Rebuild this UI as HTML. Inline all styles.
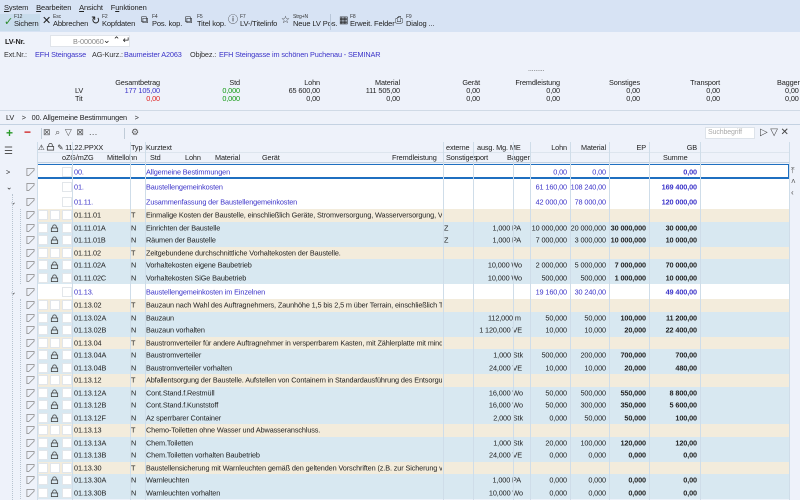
<!DOCTYPE html>
<html><head><meta charset="utf-8">
<style>
*{margin:0;padding:0;box-sizing:border-box}
body{width:800px;height:500px;overflow:hidden;background:#eef2fa;font-family:"Liberation Sans",sans-serif;font-size:7.3px;letter-spacing:-0.12px;color:#222;position:relative}
.a{position:absolute;white-space:nowrap}
.r{text-align:right}
.blue{color:#3a32c8}
.grn{color:#119911}
.red{color:#e02020}
.row{position:absolute;left:0;width:789px}
.row .a{top:50%;transform:translateY(-50%)}
.bg{position:absolute;left:37px;right:0;top:0;bottom:0}
.T .bg{background:#f3ecdc}
.N .bg{background:#d8e8f1}
.H .bg{background:#fff}
.b{font-weight:bold}
.vl{position:absolute;top:142px;bottom:0;width:1px;background:#cfdde9}
.cb{position:absolute;width:10px;height:10px;background:#fff;border:1px solid #e2e6ea;top:50%;transform:translateY(-50%)}
.ic{position:absolute;left:26px;top:50%;transform:translateY(-50%)}
.lk{position:absolute;left:50px;top:50%;transform:translateY(-50%)}
.tb span.k{display:block;font-size:5px;line-height:5px;color:#333}
</style></head><body>
<svg width="0" height="0" style="position:absolute">
<defs>
<symbol id="ed" viewBox="0 0 10 10"><path d="M1 1H9L9 3L3 9H1Z" fill="none" stroke="#888" stroke-width="0.8"/></symbol>
<symbol id="lock" viewBox="0 0 10 10"><path d="M3 5V3.5a2 2 0 0 1 4 0V5" fill="none" stroke="#444" stroke-width="0.9"/><rect x="1.5" y="5" width="7" height="4" fill="none" stroke="#444" stroke-width="0.9"/></symbol>
</defs></svg>

<!-- menu + toolbar -->
<div class="a" style="left:0;top:0;width:800px;height:32px;background:#d7e3f4"></div>
<div class="a" style="left:4px;top:3px;font-size:7.5px"><u>S</u>ystem&nbsp;&nbsp;&nbsp;&nbsp;<u>B</u>earbeiten&nbsp;&nbsp;&nbsp;&nbsp;<u>A</u>nsicht&nbsp;&nbsp;&nbsp;&nbsp;F<u>u</u>nktionen</div>
<div class="a" style="left:0;top:14px;width:40px;height:17px;background:#c8dcec"></div>
<div class="a tb" style="left:4px;top:15px;font-size:7.5px;line-height:8px">
<span style="position:absolute;left:0;top:3px;color:#2a8a2a;font-size:11px">✓</span><span style="position:absolute;left:10px"><span class="k">F12</span>Sichern</span>
<span style="position:absolute;left:38px;top:2px;font-size:11px">✕</span><span style="position:absolute;left:49px"><span class="k">Esc</span>Abbrechen</span>
<span style="position:absolute;left:87px;top:2px;font-size:11px">↻</span><span style="position:absolute;left:98px"><span class="k">F2</span>Kopfdaten</span>
<span style="position:absolute;left:137px;top:2px;font-size:10px">⧉</span><span style="position:absolute;left:148px"><span class="k">F4</span>Pos. kop.</span>
<span style="position:absolute;left:181px;top:2px;font-size:10px">⧉</span><span style="position:absolute;left:193px"><span class="k">F5</span>Titel kop.</span>
<span style="position:absolute;left:224px;top:2px;font-size:10px">ⓘ</span><span style="position:absolute;left:236px"><span class="k">F7</span>LV-/Titelinfo</span>
<span style="position:absolute;left:277px;top:2px;font-size:10px">☆</span><span style="position:absolute;left:289px"><span class="k">Strg+N</span>Neue LV Pos.</span>
<span style="position:absolute;left:335px;top:2px;font-size:10px">▦</span><span style="position:absolute;left:346px"><span class="k">F8</span>Erweit. Felder</span>
<span style="position:absolute;left:391px;top:2px;font-size:10px">⎙</span><span style="position:absolute;left:402px"><span class="k">F9</span>Dialog ...</span>
</div>
<div class="a" style="left:330px;top:14px;width:1px;height:16px;background:#b8c6d8"></div>

<!-- header form -->
<div class="a b" style="left:5px;top:37px">LV-Nr.</div>
<div class="a" style="left:50px;top:35px;width:80px;height:12px;background:#fff;border:1px solid #e0e4ea"></div>
<div class="a" style="left:73px;top:37px;color:#888">B-000060</div>
<div class="a" style="left:103px;top:35px;font-size:9px">⌄ ⌃ ↵</div>
<div class="a" style="left:4px;top:50px;color:#333">Ext.Nr.:</div>
<div class="a blue" style="left:35px;top:50px">EFH Steingasse</div>
<div class="a" style="left:92px;top:50px;color:#333">AG-Kurz.:</div>
<div class="a blue" style="left:124px;top:50px">Baumeister A2063</div>
<div class="a" style="left:190px;top:50px;color:#333">Objbez.:</div>
<div class="a blue" style="left:219px;top:50px">EFH Steingasse im schönen Puchenau - SEMINAR</div>

<div class="a" style="left:528px;top:66px;color:#555;font-size:7px">.........</div>
<div class="a" style="left:75px;top:86px">LV</div>
<div class="a" style="left:75px;top:94px">Tit</div>
<div class="a r" style="left:100px;top:78px;width:60px">Gesamtbetrag</div>
<div class="a r blue" style="left:100px;top:86px;width:60px">177 105,00</div>
<div class="a r red" style="left:100px;top:94px;width:60px">0,00</div>
<div class="a r" style="left:180px;top:78px;width:60px">Std</div>
<div class="a r grn" style="left:180px;top:86px;width:60px">0,000</div>
<div class="a r grn" style="left:180px;top:94px;width:60px">0,000</div>
<div class="a r" style="left:260px;top:78px;width:60px">Lohn</div>
<div class="a r" style="left:260px;top:86px;width:60px">65 600,00</div>
<div class="a r" style="left:260px;top:94px;width:60px">0,00</div>
<div class="a r" style="left:340px;top:78px;width:60px">Material</div>
<div class="a r" style="left:340px;top:86px;width:60px">111 505,00</div>
<div class="a r" style="left:340px;top:94px;width:60px">0,00</div>
<div class="a r" style="left:420px;top:78px;width:60px">Gerät</div>
<div class="a r" style="left:420px;top:86px;width:60px">0,00</div>
<div class="a r" style="left:420px;top:94px;width:60px">0,00</div>
<div class="a r" style="left:500px;top:78px;width:60px">Fremdleistung</div>
<div class="a r" style="left:500px;top:86px;width:60px">0,00</div>
<div class="a r" style="left:500px;top:94px;width:60px">0,00</div>
<div class="a r" style="left:580px;top:78px;width:60px">Sonstiges</div>
<div class="a r" style="left:580px;top:86px;width:60px">0,00</div>
<div class="a r" style="left:580px;top:94px;width:60px">0,00</div>
<div class="a r" style="left:660px;top:78px;width:60px">Transport</div>
<div class="a r" style="left:660px;top:86px;width:60px">0,00</div>
<div class="a r" style="left:660px;top:94px;width:60px">0,00</div>
<div class="a" style="left:777px;top:78px">Bagger</div>
<div class="a" style="left:785px;top:86px">0,00</div>
<div class="a" style="left:785px;top:94px">0,00</div>

<!-- breadcrumb -->
<div class="a" style="left:0;top:110px;width:800px;height:15px;border-top:1px solid #d0dae6;border-bottom:1px solid #c4d2e2;background:#eef2fa"></div>
<div class="a" style="left:6px;top:113px">LV&nbsp;&nbsp;&nbsp;&nbsp;&gt;&nbsp;&nbsp;&nbsp;00. Allgemeine Bestimmungen&nbsp;&nbsp;&nbsp;&nbsp;&gt;</div>

<!-- grid toolbar -->
<div class="a" style="left:6px;top:126px;color:#2a9a2a;font-size:12px;font-weight:bold">+</div>
<div class="a" style="left:24px;top:125px;color:#d02020;font-size:12px;font-weight:bold">−</div>
<div class="a" style="left:41px;top:128px;width:1px;height:11px;background:#c0ccd8"></div>
<div class="a" style="left:43px;top:127px;font-size:9px;color:#555">⊠&nbsp;&nbsp;⌕&nbsp;&nbsp;▽&nbsp;&nbsp;⊠&nbsp;&nbsp;…</div>
<div class="a" style="left:124px;top:128px;width:1px;height:11px;background:#c0ccd8"></div>
<div class="a" style="left:131px;top:127px;font-size:9px;color:#555">⚙</div>
<div class="a" style="left:705px;top:127px;width:50px;height:12px;background:#fff;border:1px solid #dde3ea;color:#aaa;font-size:7px;padding:1px 2px">Suchbegriff</div>
<div class="a" style="left:760px;top:127px;font-size:10px;color:#444">▷&nbsp;▽&nbsp;✕</div>

<!-- grid header -->
<div class="a" style="left:0;top:141px;width:789px;height:22px;background:#eef2fa"></div>
<div class="a" style="left:4px;top:146px;font-size:10px;color:#555">☰</div>
<div class="a" style="left:38px;top:142px">⚠ <svg width="9" height="9" style="vertical-align:-1px"><use href="#lock"/></svg> ✎ 11.22.PPXX</div>
<div class="a" style="left:131px;top:143px">Typ</div>
<div class="a" style="left:146px;top:143px">Kurztext</div>
<div class="a" style="left:446px;top:143px">externe</div>
<div class="a" style="left:477px;top:143px">ausg. Mg. ME</div>
<div class="a r" style="left:530px;top:143px;width:37px">Lohn</div>
<div class="a r" style="left:570px;top:143px;width:36px">Material</div>
<div class="a r" style="left:609px;top:143px;width:37px">EP</div>
<div class="a r" style="left:649px;top:143px;width:48px">GB</div>
<div class="a" style="left:62px;top:153px">oZG/mZG</div>
<div class="a" style="left:107px;top:153px">Mittellohn</div>
<div class="a" style="left:150px;top:153px">Std</div>
<div class="a" style="left:185px;top:153px">Lohn</div>
<div class="a" style="left:215px;top:153px">Material</div>
<div class="a" style="left:262px;top:153px">Gerät</div>
<div class="a" style="left:392px;top:153px">Fremdleistung</div>
<div class="a" style="left:446px;top:153px">Sonstiges</div>
<div class="a" style="left:476px;top:153px">port</div>
<div class="a" style="left:507px;top:153px">Bagger</div>
<div class="a" style="left:663px;top:153px">Summe</div>
<div class="a" style="left:37px;top:152px;width:752px;height:1px;background:#dde5ee"></div>
<div class="a" style="left:37px;top:162px;width:752px;height:1px;background:#c4d2e2"></div>

<!-- right strip -->
<div class="a" style="left:789px;top:163px;width:11px;height:337px;background:#eef2fa"></div>
<div class="a" style="left:791px;top:165px;font-size:8px;color:#555;line-height:11px">⤒<br>˄<br>‹</div>

<!-- rows -->
<div class="row H" style="top:164px;height:15px"><div class="bg" style="border:1px solid #1f6fc0;border-bottom-width:2px"></div>
<span class="a" style="left:6px">&gt;</span><svg class="ic" width="9" height="9"><use href="#ed"/></svg><div class="cb" style="left:62px"></div>
<span class="a blue" style="left:74px">00.</span><span class="a blue" style="left:146px">Allgemeine Bestimmungen</span>
<span class="a r blue" style="left:530px;width:37px">0,00</span><span class="a r blue" style="left:570px;width:36px">0,00</span><span class="a r blue b" style="left:649px;width:48px">0,00</span></div>

<div class="row H" style="top:179px;height:15px"><div class="bg"></div>
<span class="a" style="left:6px">⌄</span><svg class="ic" width="9" height="9"><use href="#ed"/></svg><div class="cb" style="left:62px"></div>
<span class="a blue" style="left:74px">01.</span><span class="a blue" style="left:146px">Baustellengemeinkosten</span>
<span class="a r blue" style="left:530px;width:37px">61 160,00</span><span class="a r blue" style="left:570px;width:36px">108 240,00</span><span class="a r blue b" style="left:649px;width:48px">169 400,00</span></div>

<div class="row H" style="top:194px;height:15px"><div class="bg"></div>
<span class="a" style="left:10px">⌄</span><svg class="ic" width="9" height="9"><use href="#ed"/></svg><div class="cb" style="left:62px"></div>
<span class="a blue" style="left:74px">01.11.</span><span class="a blue" style="left:146px">Zusammenfassung der Baustellengemeinkosten</span>
<span class="a r blue" style="left:530px;width:37px">42 000,00</span><span class="a r blue" style="left:570px;width:36px">78 000,00</span><span class="a r blue b" style="left:649px;width:48px">120 000,00</span></div>

<div class="row T" style="top:209px;height:12.5px"><div class="bg"></div><svg class="ic" width="9" height="9"><use href="#ed"/></svg><div class="cb" style="left:38px"></div><div class="cb" style="left:50px"></div><div class="cb" style="left:62px"></div>
<span class="a" style="left:74px">01.11.01</span><span class="a" style="left:131px">T</span><span class="a" style="left:146px;width:296px;overflow:hidden">Einmalige Kosten der Baustelle, einschließlich Geräte, Stromversorgung, Wasserversorgung, Verkehrs</span></div>

<div class="row N" style="top:221.5px;height:12.5px"><div class="bg"></div><svg class="ic" width="9" height="9"><use href="#ed"/></svg><div class="cb" style="left:38px"></div><svg class="lk" width="9" height="9"><use href="#lock"/></svg><div class="cb" style="left:62px"></div>
<span class="a" style="left:74px">01.11.01A</span><span class="a" style="left:131px">N</span><span class="a" style="left:146px">Einrichten der Baustelle</span><span class="a" style="left:444px">Z</span>
<span class="a r" style="left:470px;width:51px">1,000 PA</span><span class="a r" style="left:530px;width:37px">10 000,000</span><span class="a r" style="left:570px;width:36px">20 000,000</span><span class="a r b" style="left:600px;width:46px">30 000,000</span><span class="a r b" style="left:649px;width:48px">30 000,00</span></div>

<div class="row N" style="top:234px;height:12.5px"><div class="bg"></div><svg class="ic" width="9" height="9"><use href="#ed"/></svg><div class="cb" style="left:38px"></div><svg class="lk" width="9" height="9"><use href="#lock"/></svg><div class="cb" style="left:62px"></div>
<span class="a" style="left:74px">01.11.01B</span><span class="a" style="left:131px">N</span><span class="a" style="left:146px">Räumen der Baustelle</span><span class="a" style="left:444px">Z</span>
<span class="a r" style="left:470px;width:51px">1,000 PA</span><span class="a r" style="left:530px;width:37px">7 000,000</span><span class="a r" style="left:570px;width:36px">3 000,000</span><span class="a r b" style="left:600px;width:46px">10 000,000</span><span class="a r b" style="left:649px;width:48px">10 000,00</span></div>

<div class="row T" style="top:246.5px;height:12.5px"><div class="bg"></div><svg class="ic" width="9" height="9"><use href="#ed"/></svg><div class="cb" style="left:38px"></div><div class="cb" style="left:50px"></div><div class="cb" style="left:62px"></div>
<span class="a" style="left:74px">01.11.02</span><span class="a" style="left:131px">T</span><span class="a" style="left:146px">Zeitgebundene durchschnittliche Vorhaltekosten der Baustelle.</span></div>

<div class="row N" style="top:259px;height:12.5px"><div class="bg"></div><svg class="ic" width="9" height="9"><use href="#ed"/></svg><div class="cb" style="left:38px"></div><svg class="lk" width="9" height="9"><use href="#lock"/></svg><div class="cb" style="left:62px"></div>
<span class="a" style="left:74px">01.11.02A</span><span class="a" style="left:131px">N</span><span class="a" style="left:146px">Vorhaltekosten eigene Baubetrieb</span>
<span class="a r" style="left:470px;width:52px">10,000 Wo</span><span class="a r" style="left:530px;width:37px">2 000,000</span><span class="a r" style="left:570px;width:36px">5 000,000</span><span class="a r b" style="left:600px;width:46px">7 000,000</span><span class="a r b" style="left:649px;width:48px">70 000,00</span></div>

<div class="row N" style="top:271.5px;height:12.5px"><div class="bg"></div><svg class="ic" width="9" height="9"><use href="#ed"/></svg><div class="cb" style="left:38px"></div><svg class="lk" width="9" height="9"><use href="#lock"/></svg><div class="cb" style="left:62px"></div>
<span class="a" style="left:74px">01.11.02C</span><span class="a" style="left:131px">N</span><span class="a" style="left:146px">Vorhaltekosten SiGe Baubetrieb</span>
<span class="a r" style="left:470px;width:52px">10,000 Wo</span><span class="a r" style="left:530px;width:37px">500,000</span><span class="a r" style="left:570px;width:36px">500,000</span><span class="a r b" style="left:600px;width:46px">1 000,000</span><span class="a r b" style="left:649px;width:48px">10 000,00</span></div>

<div class="row H" style="top:284px;height:15px"><div class="bg"></div>
<span class="a" style="left:10px">⌄</span><svg class="ic" width="9" height="9"><use href="#ed"/></svg><div class="cb" style="left:62px"></div>
<span class="a blue" style="left:74px">01.13.</span><span class="a blue" style="left:146px">Baustellengemeinkosten im Einzelnen</span>
<span class="a r blue" style="left:530px;width:37px">19 160,00</span><span class="a r blue" style="left:570px;width:36px">30 240,00</span><span class="a r blue b" style="left:649px;width:48px">49 400,00</span></div>

<div class="row T" style="top:299px;height:12.5px"><div class="bg"></div><svg class="ic" width="9" height="9"><use href="#ed"/></svg><div class="cb" style="left:38px"></div><div class="cb" style="left:50px"></div><div class="cb" style="left:62px"></div>
<span class="a" style="left:74px">01.13.02</span><span class="a" style="left:131px">T</span><span class="a" style="left:146px;width:296px;overflow:hidden">Bauzaun nach Wahl des Auftragnehmers, Zaunhöhe 1,5 bis 2,5 m über Terrain, einschließlich Türen</span></div>

<div class="row N" style="top:311.5px;height:12.5px"><div class="bg"></div><svg class="ic" width="9" height="9"><use href="#ed"/></svg><div class="cb" style="left:38px"></div><svg class="lk" width="9" height="9"><use href="#lock"/></svg><div class="cb" style="left:62px"></div>
<span class="a" style="left:74px">01.13.02A</span><span class="a" style="left:131px">N</span><span class="a" style="left:146px">Bauzaun</span>
<span class="a" style="left:488px">112,000 m</span><span class="a r" style="left:530px;width:37px">50,000</span><span class="a r" style="left:570px;width:36px">50,000</span><span class="a r b" style="left:600px;width:46px">100,000</span><span class="a r b" style="left:649px;width:48px">11 200,00</span></div>

<div class="row N" style="top:324px;height:12.5px"><div class="bg"></div><svg class="ic" width="9" height="9"><use href="#ed"/></svg><div class="cb" style="left:38px"></div><svg class="lk" width="9" height="9"><use href="#lock"/></svg><div class="cb" style="left:62px"></div>
<span class="a" style="left:74px">01.13.02B</span><span class="a" style="left:131px">N</span><span class="a" style="left:146px">Bauzaun vorhalten</span>
<span class="a r" style="left:470px;width:52px">1 120,000 VE</span><span class="a r" style="left:530px;width:37px">10,000</span><span class="a r" style="left:570px;width:36px">10,000</span><span class="a r b" style="left:600px;width:46px">20,000</span><span class="a r b" style="left:649px;width:48px">22 400,00</span></div>

<div class="row T" style="top:336.5px;height:12.5px"><div class="bg"></div><svg class="ic" width="9" height="9"><use href="#ed"/></svg><div class="cb" style="left:38px"></div><div class="cb" style="left:50px"></div><div class="cb" style="left:62px"></div>
<span class="a" style="left:74px">01.13.04</span><span class="a" style="left:131px">T</span><span class="a" style="left:146px;width:296px;overflow:hidden">Baustromverteiler für andere Auftragnehmer in versperrbarem Kasten, mit Zählerplatte mit mindest</span></div>

<div class="row N" style="top:349px;height:12.5px"><div class="bg"></div><svg class="ic" width="9" height="9"><use href="#ed"/></svg><div class="cb" style="left:38px"></div><svg class="lk" width="9" height="9"><use href="#lock"/></svg><div class="cb" style="left:62px"></div>
<span class="a" style="left:74px">01.13.04A</span><span class="a" style="left:131px">N</span><span class="a" style="left:146px">Baustromverteiler</span>
<span class="a r" style="left:470px;width:53px">1,000 Stk</span><span class="a r" style="left:530px;width:37px">500,000</span><span class="a r" style="left:570px;width:36px">200,000</span><span class="a r b" style="left:600px;width:46px">700,000</span><span class="a r b" style="left:649px;width:48px">700,00</span></div>

<div class="row N" style="top:361.5px;height:12.5px"><div class="bg"></div><svg class="ic" width="9" height="9"><use href="#ed"/></svg><div class="cb" style="left:38px"></div><svg class="lk" width="9" height="9"><use href="#lock"/></svg><div class="cb" style="left:62px"></div>
<span class="a" style="left:74px">01.13.04B</span><span class="a" style="left:131px">N</span><span class="a" style="left:146px">Baustromverteiler vorhalten</span>
<span class="a r" style="left:470px;width:52px">24,000 VE</span><span class="a r" style="left:530px;width:37px">10,000</span><span class="a r" style="left:570px;width:36px">10,000</span><span class="a r b" style="left:600px;width:46px">20,000</span><span class="a r b" style="left:649px;width:48px">480,00</span></div>

<div class="row T" style="top:374px;height:12.5px"><div class="bg"></div><svg class="ic" width="9" height="9"><use href="#ed"/></svg><div class="cb" style="left:38px"></div><div class="cb" style="left:50px"></div><div class="cb" style="left:62px"></div>
<span class="a" style="left:74px">01.13.12</span><span class="a" style="left:131px">T</span><span class="a" style="left:146px;width:296px;overflow:hidden">Abfallentsorgung der Baustelle. Aufstellen von Containern in Standardausführung des Entsorgungs</span></div>

<div class="row N" style="top:386.5px;height:12.5px"><div class="bg"></div><svg class="ic" width="9" height="9"><use href="#ed"/></svg><div class="cb" style="left:38px"></div><svg class="lk" width="9" height="9"><use href="#lock"/></svg><div class="cb" style="left:62px"></div>
<span class="a" style="left:74px">01.13.12A</span><span class="a" style="left:131px">N</span><span class="a" style="left:146px">Cont.Stand.f.Restmüll</span>
<span class="a r" style="left:470px;width:53px">16,000 Wo</span><span class="a r" style="left:530px;width:37px">50,000</span><span class="a r" style="left:570px;width:36px">500,000</span><span class="a r b" style="left:600px;width:46px">550,000</span><span class="a r b" style="left:649px;width:48px">8 800,00</span></div>

<div class="row N" style="top:399px;height:12.5px"><div class="bg"></div><svg class="ic" width="9" height="9"><use href="#ed"/></svg><div class="cb" style="left:38px"></div><svg class="lk" width="9" height="9"><use href="#lock"/></svg><div class="cb" style="left:62px"></div>
<span class="a" style="left:74px">01.13.12B</span><span class="a" style="left:131px">N</span><span class="a" style="left:146px">Cont.Stand.f.Kunststoff</span>
<span class="a r" style="left:470px;width:53px">16,000 Wo</span><span class="a r" style="left:530px;width:37px">50,000</span><span class="a r" style="left:570px;width:36px">300,000</span><span class="a r b" style="left:600px;width:46px">350,000</span><span class="a r b" style="left:649px;width:48px">5 600,00</span></div>

<div class="row N" style="top:411.5px;height:12.5px"><div class="bg"></div><svg class="ic" width="9" height="9"><use href="#ed"/></svg><div class="cb" style="left:38px"></div><svg class="lk" width="9" height="9"><use href="#lock"/></svg><div class="cb" style="left:62px"></div>
<span class="a" style="left:74px">01.13.12F</span><span class="a" style="left:131px">N</span><span class="a" style="left:146px">Az sperrbarer Container</span>
<span class="a r" style="left:470px;width:53px">2,000 Stk</span><span class="a r" style="left:530px;width:37px">0,000</span><span class="a r" style="left:570px;width:36px">50,000</span><span class="a r b" style="left:600px;width:46px">50,000</span><span class="a r b" style="left:649px;width:48px">100,00</span></div>

<div class="row T" style="top:424px;height:12.5px"><div class="bg"></div><svg class="ic" width="9" height="9"><use href="#ed"/></svg><div class="cb" style="left:38px"></div><div class="cb" style="left:50px"></div><div class="cb" style="left:62px"></div>
<span class="a" style="left:74px">01.13.13</span><span class="a" style="left:131px">T</span><span class="a" style="left:146px">Chemo-Toiletten ohne Wasser und Abwasseranschluss.</span></div>

<div class="row N" style="top:436.5px;height:12.5px"><div class="bg"></div><svg class="ic" width="9" height="9"><use href="#ed"/></svg><div class="cb" style="left:38px"></div><svg class="lk" width="9" height="9"><use href="#lock"/></svg><div class="cb" style="left:62px"></div>
<span class="a" style="left:74px">01.13.13A</span><span class="a" style="left:131px">N</span><span class="a" style="left:146px">Chem.Toiletten</span>
<span class="a r" style="left:470px;width:53px">1,000 Stk</span><span class="a r" style="left:530px;width:37px">20,000</span><span class="a r" style="left:570px;width:36px">100,000</span><span class="a r b" style="left:600px;width:46px">120,000</span><span class="a r b" style="left:649px;width:48px">120,00</span></div>

<div class="row N" style="top:449px;height:12.5px"><div class="bg"></div><svg class="ic" width="9" height="9"><use href="#ed"/></svg><div class="cb" style="left:38px"></div><svg class="lk" width="9" height="9"><use href="#lock"/></svg><div class="cb" style="left:62px"></div>
<span class="a" style="left:74px">01.13.13B</span><span class="a" style="left:131px">N</span><span class="a" style="left:146px">Chem.Toiletten vorhalten Baubetrieb</span>
<span class="a r" style="left:470px;width:52px">24,000 VE</span><span class="a r" style="left:530px;width:37px">0,000</span><span class="a r" style="left:570px;width:36px">0,000</span><span class="a r b" style="left:600px;width:46px">0,000</span><span class="a r b" style="left:649px;width:48px">0,00</span></div>

<div class="row T" style="top:461.5px;height:12.5px"><div class="bg"></div><svg class="ic" width="9" height="9"><use href="#ed"/></svg><div class="cb" style="left:38px"></div><div class="cb" style="left:50px"></div><div class="cb" style="left:62px"></div>
<span class="a" style="left:74px">01.13.30</span><span class="a" style="left:131px">T</span><span class="a" style="left:146px;width:296px;overflow:hidden">Baustellensicherung mit Warnleuchten gemäß den geltenden Vorschriften (z.B. zur Sicherung von G</span></div>

<div class="row N" style="top:474px;height:12.5px"><div class="bg"></div><svg class="ic" width="9" height="9"><use href="#ed"/></svg><div class="cb" style="left:38px"></div><svg class="lk" width="9" height="9"><use href="#lock"/></svg><div class="cb" style="left:62px"></div>
<span class="a" style="left:74px">01.13.30A</span><span class="a" style="left:131px">N</span><span class="a" style="left:146px">Warnleuchten</span>
<span class="a r" style="left:470px;width:51px">1,000 PA</span><span class="a r" style="left:530px;width:37px">0,000</span><span class="a r" style="left:570px;width:36px">0,000</span><span class="a r b" style="left:600px;width:46px">0,000</span><span class="a r b" style="left:649px;width:48px">0,00</span></div>

<div class="row N" style="top:486.5px;height:12.5px"><div class="bg"></div><svg class="ic" width="9" height="9"><use href="#ed"/></svg><div class="cb" style="left:38px"></div><svg class="lk" width="9" height="9"><use href="#lock"/></svg><div class="cb" style="left:62px"></div>
<span class="a" style="left:74px">01.13.30B</span><span class="a" style="left:131px">N</span><span class="a" style="left:146px">Warnleuchten vorhalten</span>
<span class="a r" style="left:470px;width:53px">10,000 Wo</span><span class="a r" style="left:530px;width:37px">0,000</span><span class="a r" style="left:570px;width:36px">0,000</span><span class="a r b" style="left:600px;width:46px">0,000</span><span class="a r b" style="left:649px;width:48px">0,00</span></div>

<!-- vertical grid lines -->
<div class="vl" style="left:37px"></div><div class="vl" style="left:72px"></div><div class="vl" style="left:130px"></div><div class="vl" style="left:145px"></div>
<div class="vl" style="left:443px"></div><div class="vl" style="left:473px"></div><div class="vl" style="left:513px"></div><div class="vl" style="left:530px"></div>
<div class="vl" style="left:570px"></div><div class="vl" style="left:609px"></div><div class="vl" style="left:649px"></div><div class="vl" style="left:700px"></div><div class="vl" style="left:789px"></div>
<!-- tree dashed lines -->
<div class="a" style="left:12px;top:194px;height:306px;border-left:1px dotted #b8c4d0"></div>
<div class="a" style="left:20px;top:209px;height:75px;border-left:1px dotted #b8c4d0"></div>
<div class="a" style="left:20px;top:299px;height:200px;border-left:1px dotted #b8c4d0"></div>
</body></html>
